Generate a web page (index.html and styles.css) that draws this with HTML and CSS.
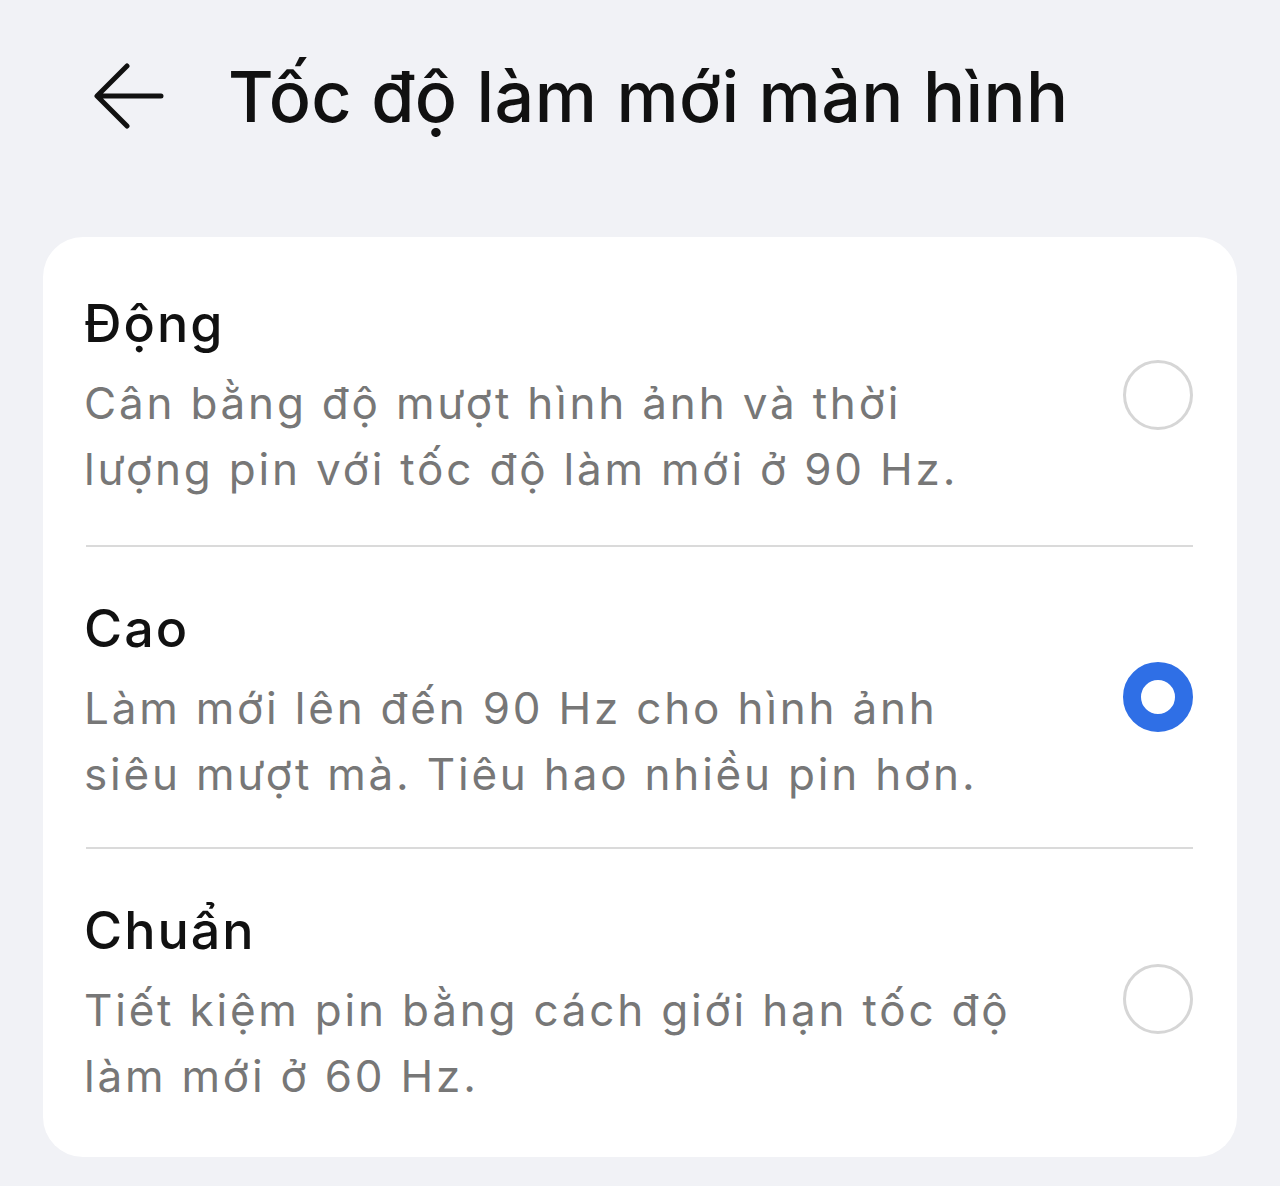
FILE: index.html
```html
<!DOCTYPE html>
<html lang="vi">
<head>
<meta charset="utf-8">
<link rel="stylesheet" href="styles.css">
</head>
<body>
<header class="topbar">
  <svg class="back" viewBox="0 0 70 70" width="70" height="70" aria-hidden="true">
    <path d="M67 35 H5 M33 5 L3 35 L33 65" fill="none" stroke="#111" stroke-width="5" stroke-linecap="round" stroke-linejoin="round"/>
  </svg>
  <h1 class="title">Tốc độ làm mới màn hình</h1>
</header>
<main class="card">
  <div class="option">
    <div class="text">
      <div class="name">Động</div>
      <div class="desc">Cân bằng độ mượt hình ảnh và thời lượng pin với tốc độ làm mới ở 90 Hz.</div>
    </div>
    <span class="radio"></span>
  </div>
  <div class="option">
    <div class="text">
      <div class="name">Cao</div>
      <div class="desc">Làm mới lên đến 90 Hz cho hình ảnh siêu mượt mà. Tiêu hao nhiều pin hơn.</div>
    </div>
    <span class="radio checked"></span>
  </div>
  <div class="option">
    <div class="text">
      <div class="name">Chuẩn</div>
      <div class="desc">Tiết kiệm pin bằng cách giới hạn tốc độ làm mới ở 60 Hz.</div>
    </div>
    <span class="radio"></span>
  </div>
</main>
</body>
</html>
```
FILE: styles.css
```css
html, body {
  margin: 0;
  padding: 0;
  background: #f1f2f6;
  font-family: Inter, "Noto Sans", sans-serif;
  color: #111;
}
body {
  width: 1280px;
  height: 1186px;
  overflow: hidden;
}
.topbar {
  display: flex;
  align-items: center;
  height: 194px;
  padding-left: 94px;
  box-sizing: border-box;
}
.back {
  flex: none;
  margin-top: -2px;
}
.title {
  margin: 0 0 0 64px;
  font-size: 70px;
  font-weight: 500;
  letter-spacing: 0.4px;
  line-height: 1;
}
.card {
  margin: 43px 43px 0 43px;
  background: #fff;
  border-radius: 40px;
  padding: 0 44px 0 43px;
}
.option {
  display: flex;
  align-items: flex-start;
  justify-content: space-between;
  height: 302px;
  padding-top: 52px;
  border-bottom: 2px solid #dadada;
  box-sizing: border-box;
}
.option:first-child {
  height: 310px;
  padding-top: 57px;
}
.option:last-child {
  border-bottom: none;
  height: 308px;
}
.text {
  width: 940px;
}
.name {
  font-size: 52px;
  font-weight: 500;
  letter-spacing: 2px;
  line-height: 60px;
  margin-bottom: 16px;
  margin-left: -2px;
}
.desc {
  font-size: 44px;
  color: #777;
  letter-spacing: 2.8px;
  line-height: 66px;
  margin-left: -2px;
}
.radio {
  flex: none;
  width: 70px;
  height: 70px;
  border-radius: 50%;
  border: 3px solid #d6d6d6;
  box-sizing: border-box;
  margin-top: 63px;
}
.option:first-child .radio {
  margin-top: 66px;
}
.radio.checked {
  border: 18px solid #2f6fe6;
  background: #fff;
}
```
